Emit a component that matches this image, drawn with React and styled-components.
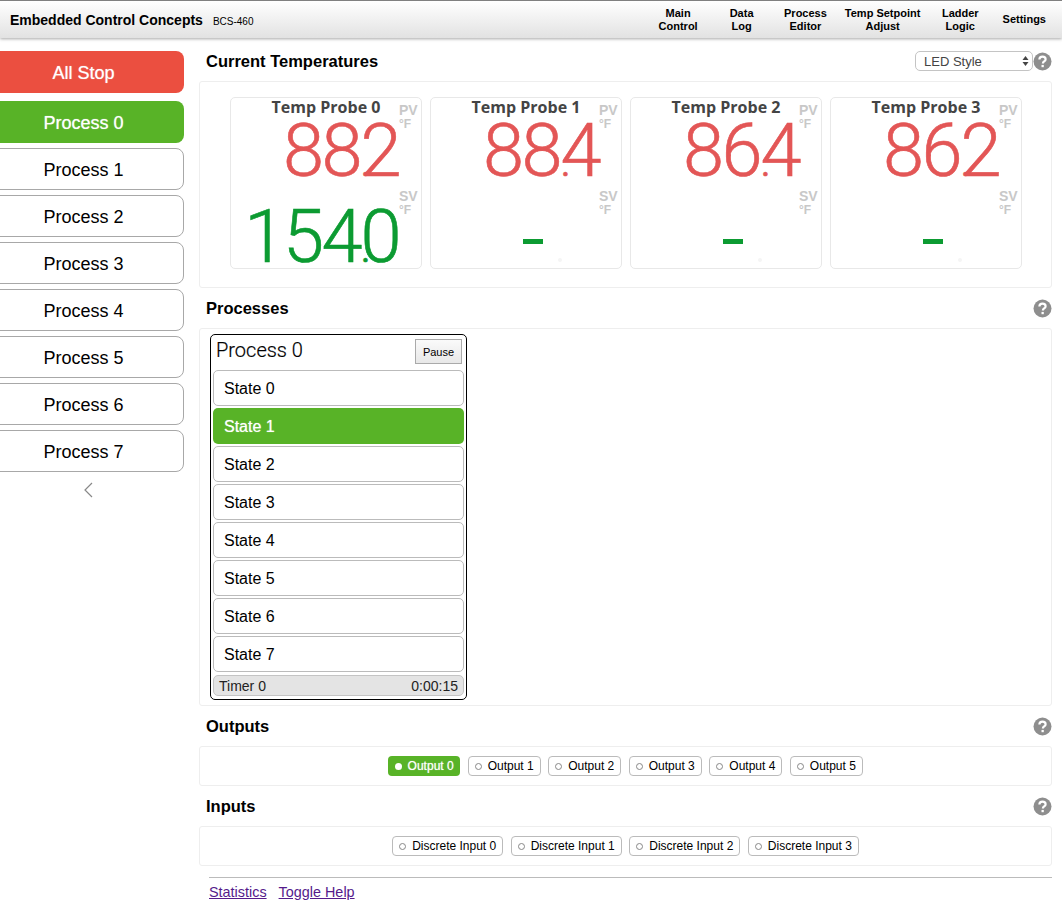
import React from 'react'
import styled, { createGlobalStyle } from 'styled-components'

const PROBES = [
  { name: 'Temp Probe 0', pv: ['88', '2'], sv: ['154', '0'] },
  { name: 'Temp Probe 1', pv: ['88', '4'] },
  { name: 'Temp Probe 2', pv: ['86', '4'] },
  { name: 'Temp Probe 3', pv: ['86', '2'] },
]
const NAV = [
  { lines: ['Main', 'Control'], gap: 0 },
  { lines: ['Data', 'Log'], gap: 32 },
  { lines: ['Process', 'Editor'], gap: 30.5 },
  { lines: ['Temp Setpoint', 'Adjust'], gap: 18 },
  { lines: ['Ladder', 'Logic'], gap: 21.5 },
  { lines: ['Settings'], gap: 24 },
]
const PROCESSES = [0, 1, 2, 3, 4, 5, 6, 7]
const OUTPUTS = [0, 1, 2, 3, 4, 5]
const INPUTS = [0, 1, 2, 3]

const GREEN = '#58b327'
const SANS = '"Liberation Sans", Arial, sans-serif'
const GLOW = '0 0 1px rgba(255, 255, 255, 0.7)'

const GlobalStyle = createGlobalStyle`
  html, body {
    margin: 0;
    padding: 0;
    background: #fff;
    overflow: hidden;
    font-family: ${SANS};
    color: #000;
  }
`

const S = {
  Page: styled.div`
    width: 1062px;
    height: 903px;
    overflow: hidden;
  `,
  Header: styled.header`
    height: 37px;
    border-top: 1px solid #808080;
    background: linear-gradient(#fff, #e2e2e2);
    box-shadow: 0 1px 3px rgba(0, 0, 0, 0.35);
    display: flex;
    align-items: center;
    justify-content: space-between;
    padding: 0 16px 0 10px;
  `,
  Brand: styled.div`
    display: flex;
    align-items: baseline;
    gap: 10px;
    font-size: 14px;
    font-weight: 700;
    small {
      font-size: 10px;
      font-weight: 400;
    }
  `,
  Nav: styled.nav`
    display: flex;
    align-items: center;
  `,
  NavItem: styled.div`
    margin-left: ${({ $gap }) => $gap}px;
    font-size: 11px;
    font-weight: 700;
    line-height: 13px;
    text-align: center;
  `,
  Body: styled.div`
    display: flex;
    align-items: flex-start;
  `,
  Side: styled.aside`
    width: 201px;
    margin-left: -17px;
    padding-top: 13px;
    flex: none;
    display: flex;
    flex-direction: column;
    gap: 5px;
  `,
  SideButton: styled.div`
    height: 42px;
    box-sizing: border-box;
    border-radius: 8px;
    padding-top: 2px;
    display: flex;
    align-items: center;
    justify-content: center;
    font-size: 18px;
    margin-bottom: ${({ $gap }) => $gap || 0}px;
    background: ${({ $bg }) => $bg || '#fff'};
    color: ${({ $bg }) => ($bg ? '#fff' : '#000')};
    border: ${({ $bg }) => ($bg ? 'none' : '1px solid #a8a8a8')};
    text-shadow: ${({ $bg }) => ($bg ? GLOW : 'none')};
  `,
  Chevron: styled.svg`
    display: block;
    margin: 4px auto 0;
    width: 12px;
    height: 18px;
    position: relative;
    left: 4px;
  `,
  Main: styled.main`
    margin-left: 15px;
    width: 853px;
    padding-top: 13px;
  `,
  SectionHead: styled.div`
    height: 20px;
    display: flex;
    align-items: center;
    justify-content: space-between;
    padding-left: 7px;
    margin-bottom: 10px;
    font-size: 16.5px;
    font-weight: 700;
    margin-top: ${({ $first }) => ($first ? 0 : 10)}px;
  `,
  HeadRight: styled.div`
    display: flex;
    align-items: center;
  `,
  Select: styled.div`
    width: 118px;
    height: 20px;
    box-sizing: border-box;
    border: 1px solid #c4c4c4;
    border-radius: 5px;
    display: flex;
    align-items: center;
    justify-content: space-between;
    padding: 0 3px 0 8px;
    font-size: 13px;
    font-weight: 400;
    color: #444;
    background: #fff;
  `,
  Panel: styled.section`
    border: 1px solid #eee;
    border-radius: 3px;
    box-sizing: border-box;
    height: ${({ $h }) => $h}px;
  `,
  Gauges: styled.div`
    display: flex;
    gap: 8px;
    padding: 15px 0 0 30px;
  `,
  Gauge: styled.div`
    width: 192px;
    height: 172px;
    box-sizing: border-box;
    border: 1px solid #e8e8e8;
    border-radius: 5px;
    display: grid;
    grid-template-columns: 168px 1fr;
    grid-template-rows: 86px 85px;
  `,
  GaugeTitle: styled.div`
    grid-row: 1;
    grid-column: 1 / -1;
    justify-self: center;
    font-family: "Open Sans", sans-serif;
    font-size: 16px;
    font-weight: 700;
    line-height: 20px;
    margin-top: -1px;
    color: #444;
  `,
  Value: styled.div`
    grid-column: 1;
    grid-row: ${({ $row }) => $row};
    align-self: end;
    justify-self: end;
    font-family: Roboto, sans-serif;
    font-weight: 300;
    font-size: 74px;
    line-height: 72px;
    letter-spacing: -2.5px;
    white-space: nowrap;
    -webkit-text-stroke: 0.6px ${({ $color }) => $color};
    color: ${({ $color }) => $color};
    margin-bottom: ${({ $row }) => ($row === 1 ? -12 : -13)}px;
  `,
  Dot: styled.span`
    font-size: 48px;
    letter-spacing: -9px;
    margin-right: -2px;
  `,
  Dash: styled.div`
    grid-column: 1;
    grid-row: 2;
    align-self: center;
    justify-self: center;
    width: 20px;
    height: 5px;
    background: #0c9b32;
    position: relative;
    top: 15px;
    left: 18px;
  `,
  GhostDot: styled.div`
    grid-column: 1;
    grid-row: 2;
    align-self: end;
    justify-self: start;
    width: 4px;
    height: 4px;
    border-radius: 50%;
    background: #f5f5f5;
    margin: 0 0 7px 127px;
  `,
  Unit: styled.div`
    grid-column: 2;
    grid-row: ${({ $row }) => $row};
    align-self: start;
    padding-top: 5px;
    font-size: 14px;
    font-weight: 700;
    line-height: 14px;
    color: #c8c8c8;
    span {
      display: block;
      font-size: 12px;
      line-height: 14px;
    }
  `,
  Proc: styled.div`
    margin: 5px 0 0 10px;
    width: 257px;
    height: 366px;
    box-sizing: border-box;
    border: 1px solid #000;
    border-radius: 5px;
    padding: 0 2px;
  `,
  ProcHead: styled.div`
    height: 35px;
    box-sizing: border-box;
    padding: 0 2px 2px 3px;
    display: flex;
    align-items: center;
    justify-content: space-between;
  `,
  ProcTitle: styled.div`
    margin-top: -3px;
    font-family: Roboto, sans-serif;
    font-size: 20px;
    font-weight: 300;
    -webkit-text-stroke: 0.2px #000;
  `,
  Pause: styled.div`
    width: 47px;
    height: 25px;
    box-sizing: border-box;
    border: 1px solid #aaa;
    background: linear-gradient(#fafafa, #e8e8e8);
    display: flex;
    align-items: center;
    justify-content: center;
    font-size: 11px;
  `,
  States: styled.div`
    display: flex;
    flex-direction: column;
    gap: 2px;
  `,
  State: styled.div`
    height: 36px;
    box-sizing: border-box;
    border-radius: 5px;
    padding-top: 1px;
    display: flex;
    align-items: center;
    font-size: 16px;
    padding-left: ${({ $on }) => ($on ? 11 : 10)}px;
    background: ${({ $on }) => ($on ? GREEN : '#fff')};
    color: ${({ $on }) => ($on ? '#fff' : '#000')};
    border: ${({ $on }) => ($on ? 'none' : '1px solid #bbb')};
    text-shadow: ${({ $on }) => ($on ? GLOW : 'none')};
  `,
  Timer: styled.div`
    margin-top: 3px;
    height: 21px;
    box-sizing: border-box;
    border: 1px solid #c4c4c4;
    border-radius: 5px;
    background: #e4e4e4;
    display: flex;
    align-items: center;
    justify-content: space-between;
    padding: 0 5px;
    font-size: 14px;
    color: #222;
  `,
  Chips: styled.div`
    height: 100%;
    display: flex;
    align-items: center;
    justify-content: center;
    gap: 7.5px;
  `,
  Chip: styled.div`
    height: 20px;
    box-sizing: border-box;
    display: flex;
    align-items: center;
    gap: 6px;
    padding: 0 ${({ $on }) => ($on ? 6.5 : 6)}px;
    border-radius: 4px;
    font-size: 12px;
    background: ${({ $on }) => ($on ? GREEN : '#fff')};
    color: ${({ $on }) => ($on ? '#fff' : '#000')};
    border: ${({ $on }) => ($on ? 'none' : '1px solid #bbb')};
    text-shadow: ${({ $on }) => ($on ? GLOW : 'none')};
  `,
  Led: styled.i`
    width: 7px;
    height: 7px;
    box-sizing: border-box;
    border-radius: 50%;
    background: ${({ $on }) => ($on ? '#fff' : 'transparent')};
    border: ${({ $on }) => ($on ? 'none' : '1.5px solid #888')};
  `,
  Footer: styled.footer`
    margin: 11px 0 0 10px;
    border-top: 1px solid #bbb;
    padding-top: 6px;
    display: flex;
    gap: 12px;
    font-size: 14.4px;
    a {
      color: #551a8b;
    }
  `,
}

const Help = () => (
  <svg width="19" height="19" viewBox="0 0 19 19" aria-hidden="true">
    <circle cx="9.5" cy="9.5" r="9" fill="#8e8e8e" />
    <path
      d="M6.4 7.4c0-1.8 1.4-2.8 3.1-2.8 1.8 0 3.1 1 3.1 2.6 0 2.3-2.7 2.2-2.7 4.2"
      fill="none"
      stroke="#fff"
      strokeWidth="2.2"
    />
    <rect x="8.5" y="12.9" width="2.3" height="2.3" fill="#fff" />
  </svg>
)

const Reading = ({ parts, color, row }) => (
  <S.Value $row={row} $color={color}>
    {parts[0]}
    <S.Dot>.</S.Dot>
    {parts[1]}
  </S.Value>
)

const App = () => (
  <S.Page>
    <GlobalStyle />
    <S.Header>
      <S.Brand>
        Embedded Control Concepts <small>BCS-460</small>
      </S.Brand>
      <S.Nav>
        {NAV.map(({ lines, gap }) => (
          <S.NavItem key={lines[0]} $gap={gap}>
            {lines.map((line) => (
              <div key={line}>{line}</div>
            ))}
          </S.NavItem>
        ))}
      </S.Nav>
    </S.Header>

    <S.Body>
      <S.Side>
        <S.SideButton $bg="#eb4f40" $gap={3}>All Stop</S.SideButton>
        {PROCESSES.map((n) => (
          <S.SideButton key={n} $bg={n === 0 ? GREEN : undefined}>
            Process {n}
          </S.SideButton>
        ))}
        <S.Chevron viewBox="0 0 12 18">
          <path d="M10 2 3 9l7 7" fill="none" stroke="#888" strokeWidth="1.2" />
        </S.Chevron>
      </S.Side>

      <S.Main>
        <S.SectionHead $first>
          Current Temperatures
          <S.HeadRight>
            <S.Select>
              LED Style
              <svg width="7" height="12" viewBox="0 0 7 12">
                <path d="M3.5 1 6.5 5H.5zM3.5 11 .5 7h6z" fill="#444" />
              </svg>
            </S.Select>
            <Help />
          </S.HeadRight>
        </S.SectionHead>
        <S.Panel $h={207}>
          <S.Gauges>
            {PROBES.map((p) => (
              <S.Gauge key={p.name}>
                <S.GaugeTitle>{p.name}</S.GaugeTitle>
                <Reading parts={p.pv} color="#e35656" row={1} />
                <S.Unit $row={1}>PV<span>°F</span></S.Unit>
                {p.sv ? (
                  <Reading parts={p.sv} color="#0c9b32" row={2} />
                ) : (
                  <>
                    <S.Dash />
                    <S.GhostDot />
                  </>
                )}
                <S.Unit $row={2}>SV<span>°F</span></S.Unit>
              </S.Gauge>
            ))}
          </S.Gauges>
        </S.Panel>

        <S.SectionHead>
          Processes
          <Help />
        </S.SectionHead>
        <S.Panel $h={378}>
          <S.Proc>
            <S.ProcHead>
              <S.ProcTitle>Process 0</S.ProcTitle>
              <S.Pause>Pause</S.Pause>
            </S.ProcHead>
            <S.States>
              {PROCESSES.map((n) => (
                <S.State key={n} $on={n === 1}>State {n}</S.State>
              ))}
            </S.States>
            <S.Timer>
              <span>Timer 0</span>
              <span>0:00:15</span>
            </S.Timer>
          </S.Proc>
        </S.Panel>

        <S.SectionHead>
          Outputs
          <Help />
        </S.SectionHead>
        <S.Panel $h={40}>
          <S.Chips>
            {OUTPUTS.map((n) => (
              <S.Chip key={n} $on={n === 0}>
                <S.Led $on={n === 0} />
                Output {n}
              </S.Chip>
            ))}
          </S.Chips>
        </S.Panel>

        <S.SectionHead>
          Inputs
          <Help />
        </S.SectionHead>
        <S.Panel $h={40}>
          <S.Chips>
            {INPUTS.map((n) => (
              <S.Chip key={n}>
                <S.Led />
                Discrete Input {n}
              </S.Chip>
            ))}
          </S.Chips>
        </S.Panel>

        <S.Footer>
          <a href="#statistics">Statistics</a>
          <a href="#help">Toggle Help</a>
        </S.Footer>
      </S.Main>
    </S.Body>
  </S.Page>
)

export default App
